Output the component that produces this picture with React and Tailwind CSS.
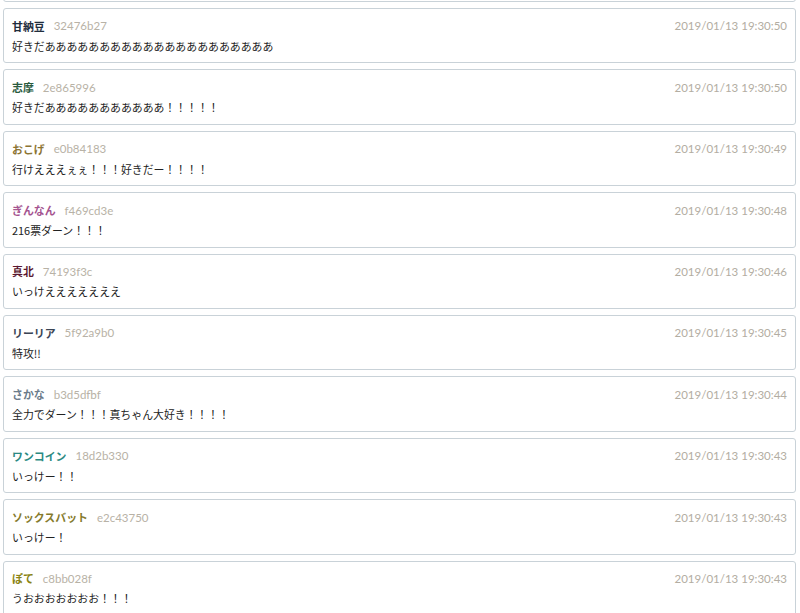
const comments = [
  { name: "甘納豆", color: "text-[#1f2d3d]", id: "32476b27", body: "好きだあああああああああああああああああああああ", time: "2019/01/13 19:30:50" },
  { name: "志摩", color: "text-[#2a5a3e]", id: "2e865996", body: "好きだあああああああああああ！！！！！", time: "2019/01/13 19:30:50" },
  { name: "おこげ", color: "text-[#8c7433]", id: "e0b84183", body: "行けえええぇぇ！！！好きだー！！！！", time: "2019/01/13 19:30:49" },
  { name: "ぎんなん", color: "text-[#a4538f]", id: "f469cd3e", body: "216票ダーン！！！", time: "2019/01/13 19:30:48" },
  { name: "真北", color: "text-[#5a1730]", id: "74193f3c", body: "いっけえええええええ", time: "2019/01/13 19:30:46" },
  { name: "リーリア", color: "text-[#3a4454]", id: "5f92a9b0", body: "特攻!!", time: "2019/01/13 19:30:45" },
  { name: "さかな", color: "text-[#6b7b8a]", id: "b3d5dfbf", body: "全力でダーン！！！真ちゃん大好き！！！！", time: "2019/01/13 19:30:44" },
  { name: "ワンコイン", color: "text-[#2b8a82]", id: "18d2b330", body: "いっけー！！", time: "2019/01/13 19:30:43" },
  { name: "ソックスバット", color: "text-[#857a2c]", id: "e2c43750", body: "いっけー！", time: "2019/01/13 19:30:43" },
  { name: "ぽて", color: "text-[#8a8414]", id: "c8bb028f", body: "うおおおおおおお！！！", time: "2019/01/13 19:30:43" },
];

export default function App() {
  return (
    <div
      className="h-[613px] overflow-hidden bg-white"
      style={{ fontFamily: '"Noto Sans CJK JP", "Noto Sans", sans-serif' }}
    >
      <div className="mt-[-53.4px] flex flex-col gap-[6px] pl-[3px] pr-[4px]">
        {/* previous card, clipped at the top */}
        <div className="h-[55.4px] shrink-0 rounded-[3px] border border-[#c9d2d8] bg-white" />
        {comments.map((c) => (
          <div
            key={c.id}
            className="h-[55.4px] shrink-0 rounded-[3px] border border-[#c9d2d8] bg-white px-[8px] pt-[7px]"
          >
            <div className="flex h-[20px] items-center justify-between">
              <div className="flex items-center">
                <span className={`text-[10.9px] font-bold ${c.color}`}>{c.name}</span>
                <span className="ml-[9px] text-[11.5px] text-[#b8b2a6]" style={{ fontFamily: "Lato, sans-serif" }}>
                  {c.id}
                </span>
              </div>
              <span className="text-[11.5px] text-[#b3ada2]" style={{ fontFamily: "Lato, sans-serif" }}>
                {c.time}
              </span>
            </div>
            <div className="flex h-[20px] items-center text-[10.9px] text-[#222]">{c.body}</div>
          </div>
        ))}
      </div>
    </div>
  );
}
